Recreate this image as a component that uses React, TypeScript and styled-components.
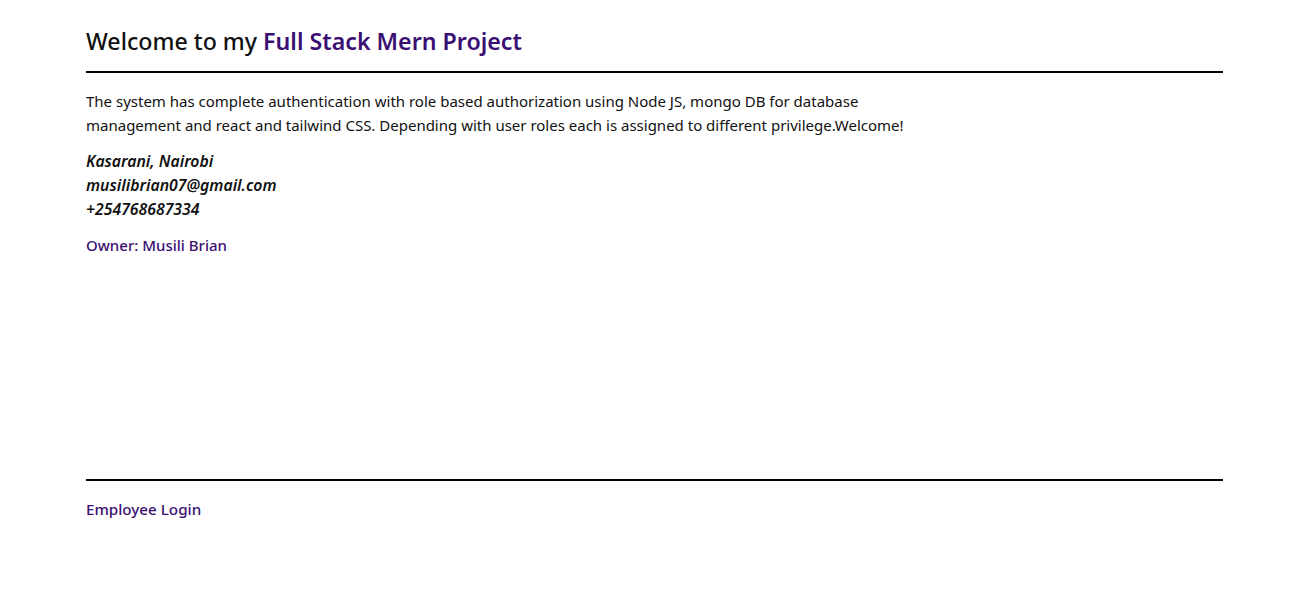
import styled, { createGlobalStyle } from "styled-components";

const GlobalStyle = createGlobalStyle`
  html, body {
    margin: 0;
    padding: 0;
    background: #ffffff;
  }
  body {
    font-family: "Noto Sans", "Open Sans", "Liberation Sans", sans-serif;
    color: #111111;
  }
`;

const Page = styled.section`
  box-sizing: border-box;
  min-height: 100vh;
  display: flex;
  flex-direction: column;
  padding: 0 68px 0 86px;
`;

const Header = styled.header`
  padding-top: 25px;
  padding-bottom: 14px;
  border-bottom: 2px solid #000;
`;

const Title = styled.h1`
  margin: 0;
  font-size: 23.2px;
  line-height: 32px;
  font-weight: 500;
  color: #111;
`;

const Accent = styled.span<{ $weight?: number }>`
  color: #3a0f72;
  font-weight: ${(p) => p.$weight ?? 600};
`;

const Main = styled.main`
  flex: 1;
  padding-top: 16px;
`;

const Intro = styled.p`
  margin: 0;
  max-width: 830px;
  font-size: 15px;
  line-height: 24px;
`;

const Address = styled.address`
  margin-top: 12px;
  font-size: 15.8px;
  line-height: 24px;
  font-weight: 600;
  font-style: italic;
`;

const Owner = styled.p`
  margin: 12px 0 0;
  font-size: 15px;
  line-height: 24px;
`;

const Footer = styled.footer`
  border-top: 2px solid #000;
  padding-top: 16px;
  padding-bottom: 78px;
`;

const LoginLink = styled.a`
  font-size: 15.2px;
  line-height: 24px;
  font-weight: 500;
  color: #3a0f72;
  text-decoration: none;
`;

export default function App() {
  return (
    <>
      <GlobalStyle />
      <Page>
        <Header>
          <Title>
            Welcome to my <Accent>Full Stack Mern Project</Accent>
          </Title>
        </Header>
        <Main>
          <Intro>
            The system has complete authentication with role based authorization
            using Node JS, mongo DB for database management and react and
            tailwind CSS. Depending with user roles each is assigned to
            different privilege.Welcome!
          </Intro>
          <Address>
            Kasarani, Nairobi
            <br />
            musilibrian07@gmail.com
            <br />
            +254768687334
          </Address>
          <Owner>
            <Accent $weight={500}>Owner: Musili Brian</Accent>
          </Owner>
        </Main>
        <Footer>
          <LoginLink href="#">Employee Login</LoginLink>
        </Footer>
      </Page>
    </>
  );
}
